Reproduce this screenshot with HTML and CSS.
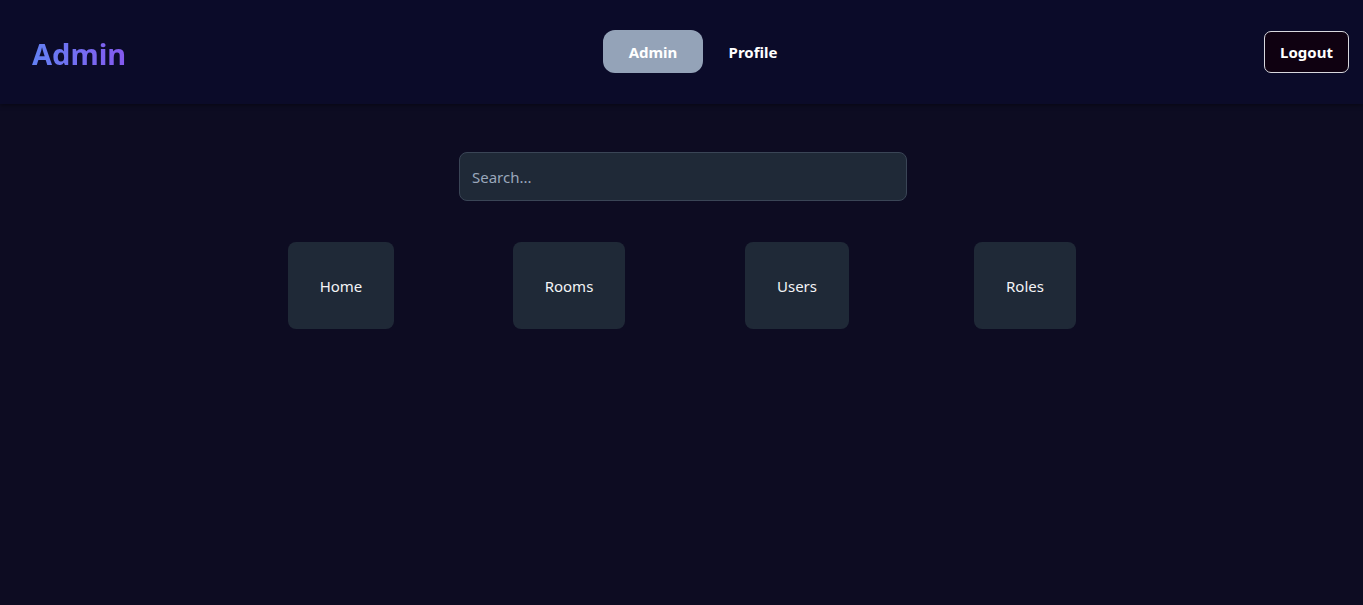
FILE: index.html
```html
<!DOCTYPE html>
<html lang="en">
<head>
<meta charset="utf-8">
<title>Admin</title>
<link rel="stylesheet" href="styles.css">
</head>
<body>
<header class="topbar">
  <div class="logo">Admin</div>
  <nav class="nav">
    <a class="nav-btn active">Admin</a>
    <a class="nav-btn">Profile</a>
  </nav>
  <button class="logout">Logout</button>
</header>
<main class="main">
  <input class="search" type="text" placeholder="Search...">
  <div class="cards">
    <div class="cell"><div class="card">Home</div></div>
    <div class="cell"><div class="card">Rooms</div></div>
    <div class="cell"><div class="card">Users</div></div>
    <div class="cell"><div class="card">Roles</div></div>
  </div>
</main>
</body>
</html>
```
FILE: styles.css
```css
* { box-sizing: border-box; }
html, body { margin: 0; height: 100%; }
body {
  background: #0d0c22;
  font-family: "Noto Sans", "Open Sans", sans-serif;
  color: #ffffff;
}
.topbar {
  height: 104px;
  display: flex;
  align-items: center;
  justify-content: space-between;
  padding: 0 14px 0 32px;
  background: #0b0b29;
  box-shadow: 0 2px 4px rgba(0,0,0,0.35);
}
.logo {
  width: 110px;
  font-size: 29px;
  font-weight: 700;
  background: linear-gradient(90deg, #6381f3, #8a52ee);
  -webkit-background-clip: text;
  background-clip: text;
  color: transparent;
  padding-top: 2px;
}
.nav { display: flex; margin-bottom: 1px; }
.nav-btn {
  width: 100px;
  height: 43px;
  display: flex;
  align-items: center;
  justify-content: center;
  font-size: 15px;
  font-weight: 700;
  color: #ffffff;
  border-radius: 12px;
}
.nav-btn.active { background: #94a3b8; }
.logout {
  width: 85px;
  height: 42px;
  background: #0f0111;
  border: 1px solid #d8d8de;
  border-radius: 7px;
  color: #ffffff;
  font-family: inherit;
  font-size: 15px;
  font-weight: 700;
  padding: 0;
}
.main {
  display: flex;
  flex-direction: column;
  align-items: center;
  padding: 48px 0 0 3px;
}
.search {
  width: 448px;
  height: 49px;
  background: #1f2937;
  border: 1px solid #3a4556;
  border-radius: 8px;
  padding: 0 12px;
  font-family: inherit;
  font-size: 15px;
  color: #e5e7eb;
  outline: none;
}
.search::placeholder { color: #9aa7bb; }
.cards {
  margin-top: 41px;
  display: grid;
  grid-template-columns: repeat(4, 228px);
}
.cell { display: flex; justify-content: center; }
.card {
  background: #1f2937;
  border-radius: 8px;
  padding: 32px 32px 31px;
  line-height: 24px;
  font-size: 15px;
  color: #f3f4f6;
}
```
